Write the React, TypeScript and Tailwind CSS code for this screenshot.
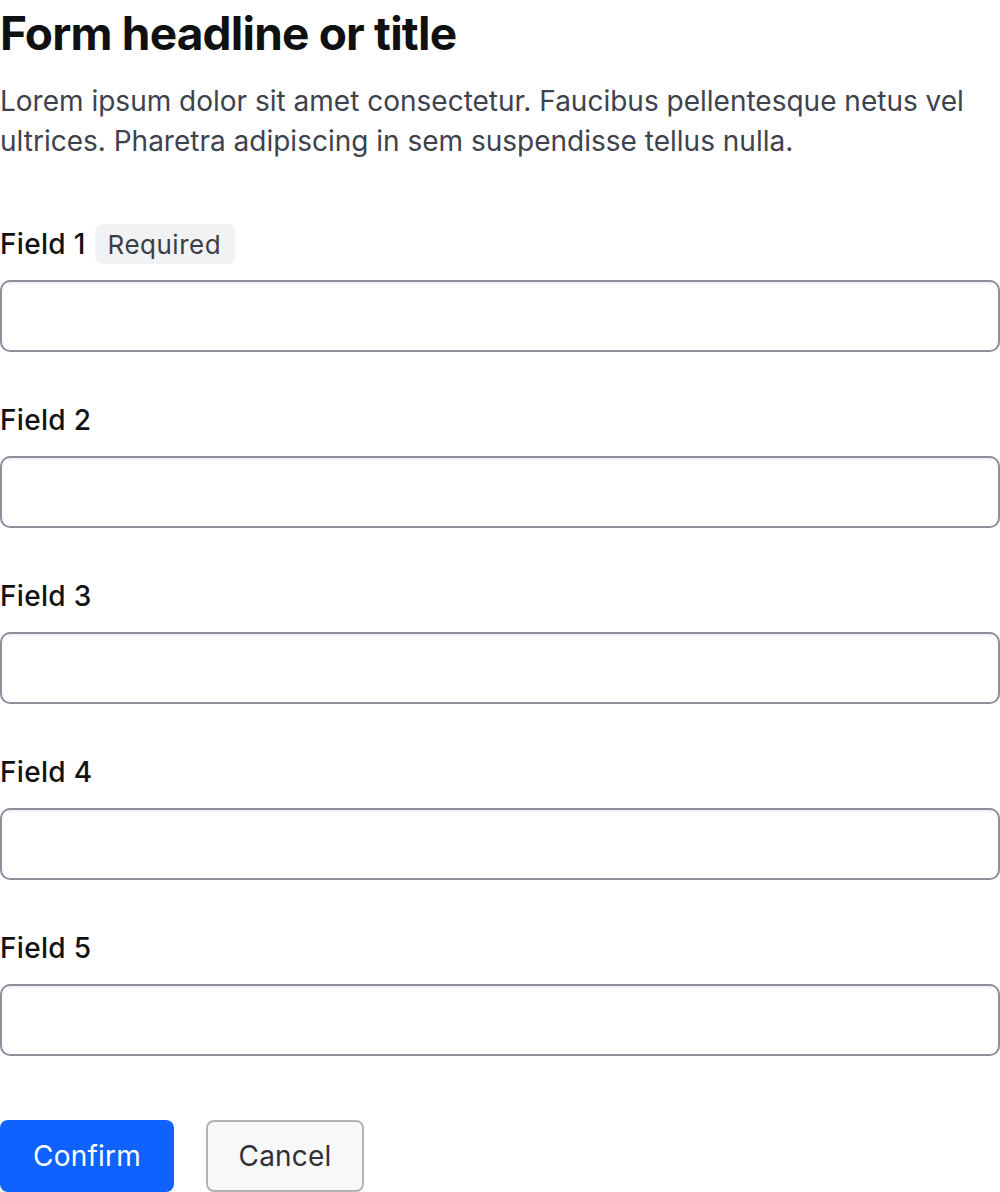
import React from "react";

const font = { fontFamily: "Inter, 'Noto Sans', sans-serif" };

function Field({ label, required }: { label: string; required?: boolean }) {
  return (
    <div className="flex flex-col">
      <div className="flex items-center h-[40px] gap-[9px]">
        <span className="text-[28px] font-medium tracking-[0.3px] text-[#111214]">{label}</span>
        {required && (
          <span className="h-[40px] pl-[13px] pr-[14px] flex items-center rounded-[8px] bg-[#f1f2f4] text-[26px] tracking-[0.5px] text-[#3b3d45]">
            Required
          </span>
        )}
      </div>
      <input
        className="mt-[16px] h-[72px] w-full rounded-[10px] border-2 border-[#8f909c] bg-white shadow-[inset_0_2px_2px_rgba(0,0,0,0.06)] outline-none px-4 text-[24px]"
        type="text"
      />
    </div>
  );
}

export default function App() {
  return (
    <div className="w-[1000px] h-[1192px] bg-white overflow-hidden" style={font}>
      <h1 className="text-[46px] font-bold leading-[56px] tracking-[-0.8px] text-[#0f1012] pt-[5px]">
        Form headline or title
      </h1>
      <p className="mt-[20px] text-[28px] leading-[40px] text-[#3e424d]">
        Lorem ipsum dolor sit amet consectetur. Faucibus pellentesque netus vel ultrices. Pharetra adipiscing in sem suspendisse tellus nulla.
      </p>
      <div className="mt-[63px] flex flex-col gap-[48px]">
        <Field label="Field 1" required />
        <Field label="Field 2" />
        <Field label="Field 3" />
        <Field label="Field 4" />
        <Field label="Field 5" />
      </div>
      <div className="mt-[64px] flex gap-[32px]">
        <button className="h-[72px] w-[174px] rounded-[8px] bg-[#0f62fe] text-white text-[28px] tracking-[0.2px]">Confirm</button>
        <button className="h-[72px] w-[158px] rounded-[8px] bg-[#f8f8f8] border-2 border-[#b3b3b3] text-[#2f3136] text-[28px] tracking-[0.2px]">Cancel</button>
      </div>
    </div>
  );
}
